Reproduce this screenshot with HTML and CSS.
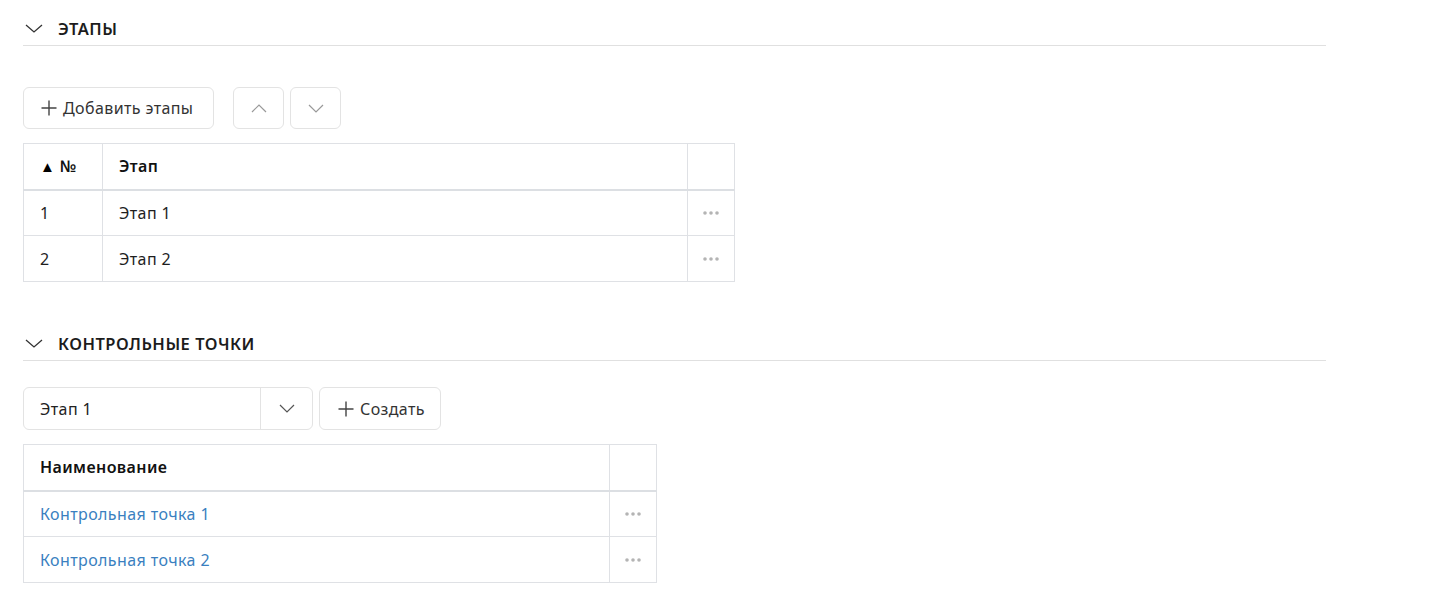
FILE: index.html
```html
<!DOCTYPE html>
<html lang="ru">
<head>
<meta charset="utf-8">
<title>Этапы</title>
<link rel="stylesheet" href="styles.css">
</head>
<body>
<div class="page">
  <section class="section">
    <div class="section-head">
      <svg class="chev" width="18" height="9" viewBox="0 0 18 9"><path d="M1 1 L9 8 L17 1" fill="none" stroke="#333" stroke-width="1.3"/></svg>
      <h2 class="section-title">ЭТАПЫ</h2>
    </div>
    <div class="toolbar toolbar-first">
      <button class="btn btn-add"><svg class="plus" width="16" height="16" viewBox="0 0 16 16"><path d="M8 0.5 V15.5 M0.5 8 H15.5" stroke="#444" stroke-width="1.4" fill="none"/></svg>Добавить этапы</button>
      <div class="arrow-group">
        <button class="btn btn-icon"><svg width="16" height="9" viewBox="0 0 16 9"><path d="M1 8 L8 1 L15 8" fill="none" stroke="#999" stroke-width="1.2"/></svg></button>
        <button class="btn btn-icon"><svg width="16" height="9" viewBox="0 0 16 9"><path d="M1 1 L8 8 L15 1" fill="none" stroke="#999" stroke-width="1.2"/></svg></button>
      </div>
    </div>
    <table class="grid grid-stages">
      <thead>
        <tr><th class="col-num"><span class="sort">▲</span> №</th><th>Этап</th><th class="col-act"></th></tr>
      </thead>
      <tbody>
        <tr><td>1</td><td>Этап 1</td><td class="col-act"><svg class="dots" width="16" height="4" viewBox="0 0 16 4"><circle cx="2" cy="2" r="1.8"/><circle cx="8" cy="2" r="1.8"/><circle cx="14" cy="2" r="1.8"/></svg></td></tr>
        <tr><td>2</td><td>Этап 2</td><td class="col-act"><svg class="dots" width="16" height="4" viewBox="0 0 16 4"><circle cx="2" cy="2" r="1.8"/><circle cx="8" cy="2" r="1.8"/><circle cx="14" cy="2" r="1.8"/></svg></td></tr>
      </tbody>
    </table>
  </section>

  <section class="section section-second">
    <div class="section-head">
      <svg class="chev" width="18" height="9" viewBox="0 0 18 9"><path d="M1 1 L9 8 L17 1" fill="none" stroke="#333" stroke-width="1.3"/></svg>
      <h2 class="section-title">КОНТРОЛЬНЫЕ ТОЧКИ</h2>
    </div>
    <div class="toolbar toolbar-second">
      <div class="select">
        <span class="select-value">Этап 1</span>
        <span class="select-arrow"><svg width="16" height="9" viewBox="0 0 16 9"><path d="M1 1 L8 8 L15 1" fill="none" stroke="#555" stroke-width="1.2"/></svg></span>
      </div>
      <button class="btn btn-create"><svg class="plus" width="16" height="16" viewBox="0 0 16 16"><path d="M8 0.5 V15.5 M0.5 8 H15.5" stroke="#444" stroke-width="1.4" fill="none"/></svg>Создать</button>
    </div>
    <table class="grid grid-points">
      <thead>
        <tr><th>Наименование</th><th class="col-act"></th></tr>
      </thead>
      <tbody>
        <tr><td><a class="link" href="#">Контрольная точка 1</a></td><td class="col-act"><svg class="dots" width="16" height="4" viewBox="0 0 16 4"><circle cx="2" cy="2" r="1.8"/><circle cx="8" cy="2" r="1.8"/><circle cx="14" cy="2" r="1.8"/></svg></td></tr>
        <tr><td><a class="link" href="#">Контрольная точка 2</a></td><td class="col-act"><svg class="dots" width="16" height="4" viewBox="0 0 16 4"><circle cx="2" cy="2" r="1.8"/><circle cx="8" cy="2" r="1.8"/><circle cx="14" cy="2" r="1.8"/></svg></td></tr>
      </tbody>
    </table>
  </section>
</div>
</body>
</html>
```

FILE: styles.css
```css
* { box-sizing: border-box; }
html, body { margin: 0; background: #fff; }
body {
  font-family: "Noto Sans", "Open Sans", sans-serif;
  font-size: 16px;
  letter-spacing: 0.4px;
  color: #222;
}
.page {
  padding: 15px 0 0 23px;
  width: 1326px;
}
.section-head {
  display: flex;
  align-items: center;
  height: 31px;
  padding: 0 0 3px 2px;
  border-bottom: 1px solid #e0e0e0;
}
.chev { margin-right: 15px; }
.section-title {
  margin: 0;
  font-size: 16.5px;
  font-weight: 600;
  color: #1c1c1c;
  letter-spacing: 0.5px;
}
.toolbar { display: flex; align-items: center; }
.toolbar-first { margin-top: 41px; }
.toolbar-second { margin-top: 26px; gap: 6px; }
.btn {
  font-family: inherit;
  font-size: 16px;
  letter-spacing: 0.4px;
  color: #333;
  background: #fff;
  border: 1px solid #e3e3e3;
  border-radius: 6px;
  height: 42px;
  display: flex;
  align-items: center;
  cursor: pointer;
}
.btn-add { padding: 0 0 0 17px; width: 191px; }
.plus { margin-right: 6px; flex: none; }
.arrow-group { display: flex; gap: 6px; margin-left: 19px; }
.btn-icon { width: 51px; justify-content: center; padding: 0; }
.grid {
  border-collapse: collapse;
  margin-top: 14px;
  font-size: 16px;
}
.grid th, .grid td {
  border: 1px solid #dfe1e5;
  text-align: left;
  padding: 0 16px;
}
.grid th {
  height: 46px;
  font-weight: 600;
  color: #111;
  border-bottom: 2px solid #dcdfe3;
}
.grid td { height: 46px; color: #1e1e1e; }
.grid-stages { width: 712px; }
.grid-stages .col-num { width: 79px; }
.sort { font-size: 15px; color: #000; }
.grid-points { width: 634px; }
.col-act { width: 47px; text-align: center !important; padding: 0 !important; }
.dots { fill: #b4b4b4; display: block; margin: 0 auto; }
.section-second { margin-top: 48px; }
.select {
  width: 290px;
  height: 43px;
  border: 1px solid #e3e3e3;
  border-radius: 6px;
  display: flex;
  align-items: center;
}
.select-value { flex: 1; padding-left: 16px; color: #222; }
.select-arrow {
  width: 52px;
  height: 100%;
  border-left: 1px solid #e3e3e3;
  display: flex;
  align-items: center;
  justify-content: center;
}
.btn-create { width: 122px; height: 43px; padding: 0 0 0 18px; }
.link { color: #3a7fc0; text-decoration: none; }
```
